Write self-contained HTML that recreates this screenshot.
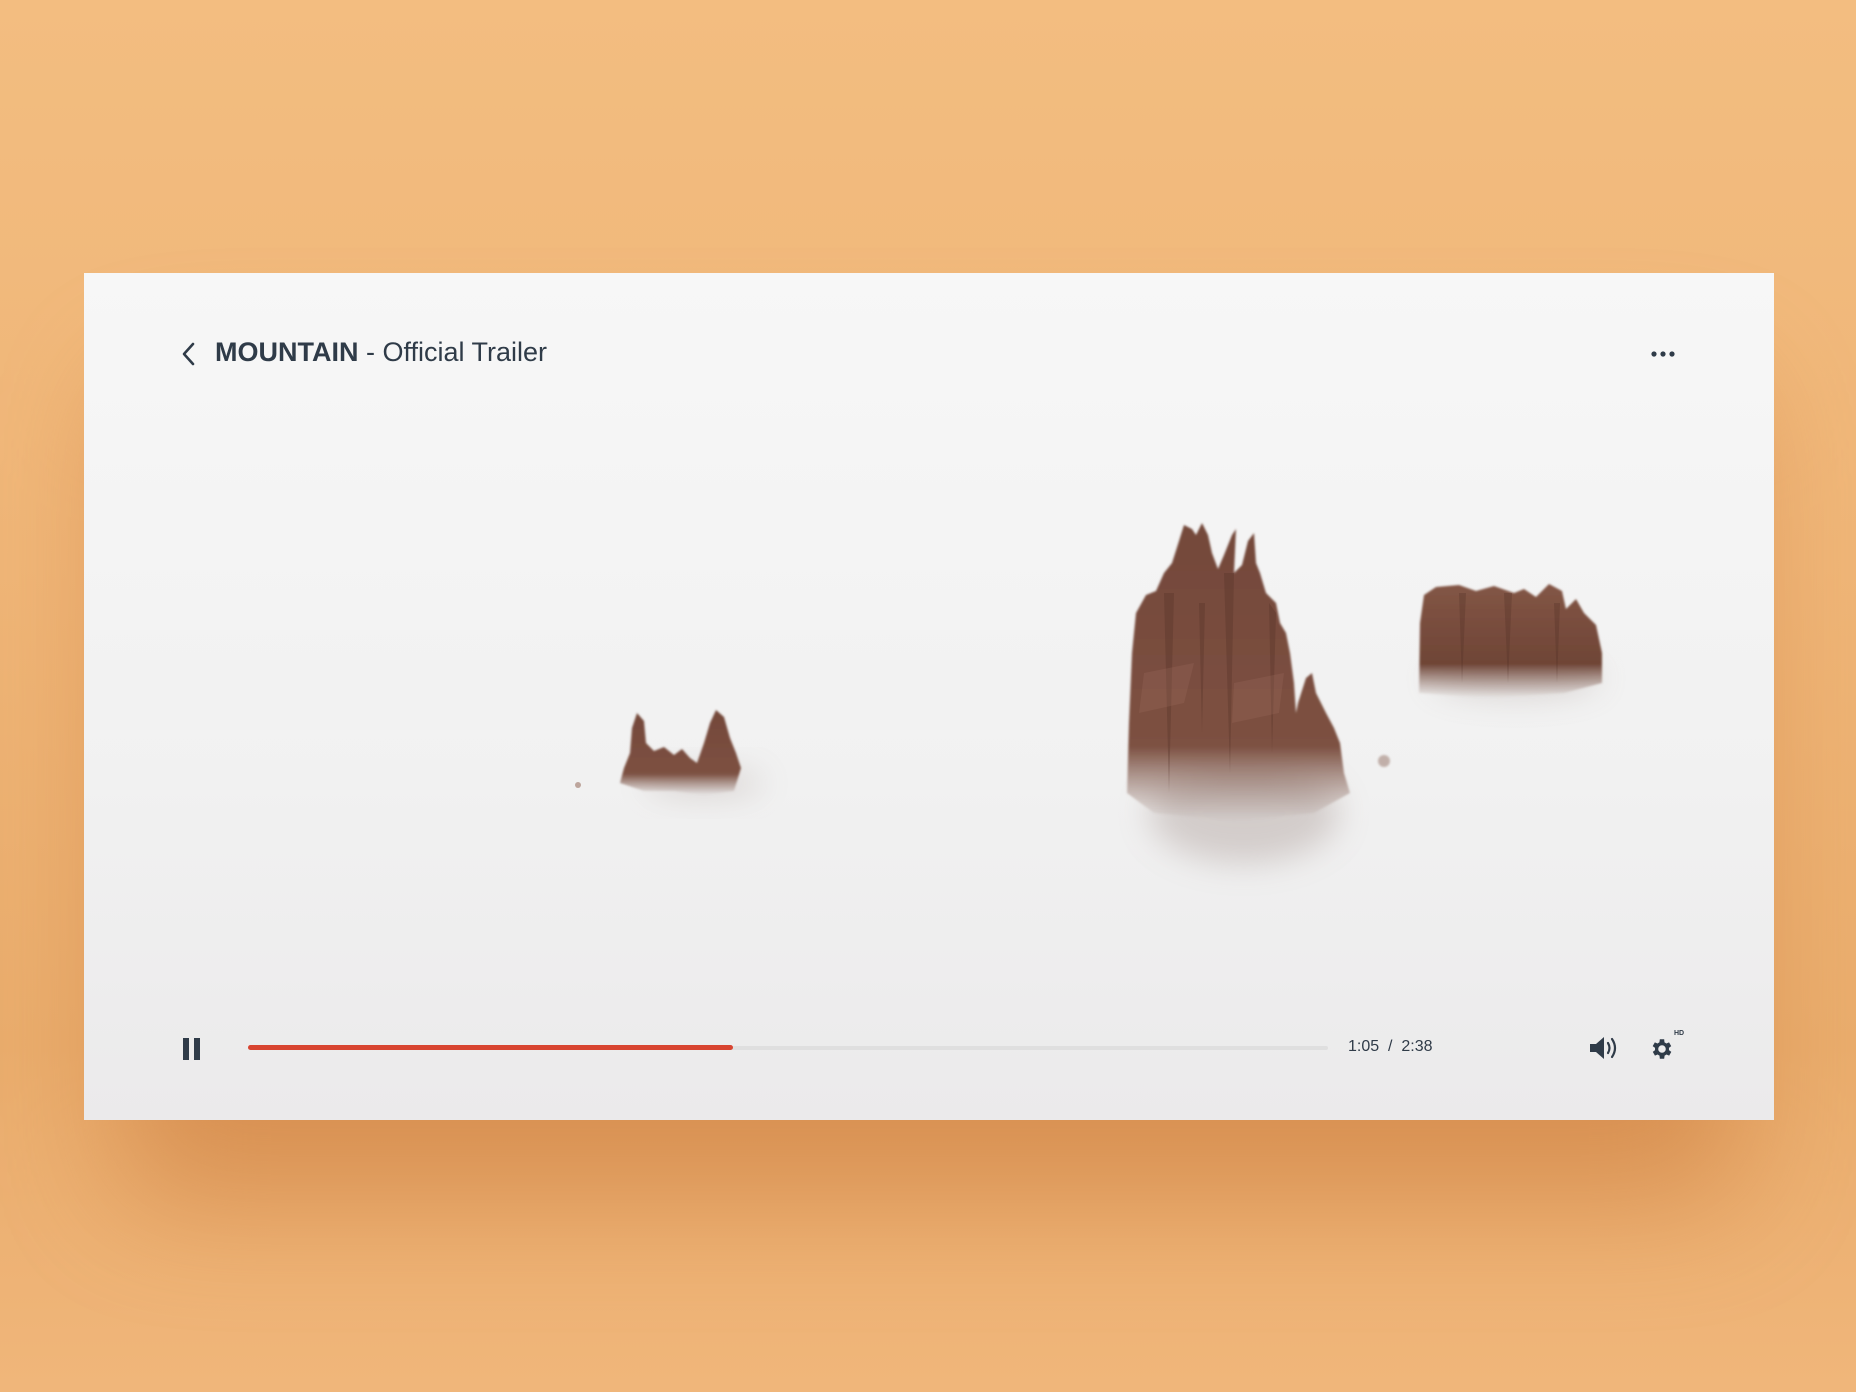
<!DOCTYPE html>
<html><head><meta charset="utf-8"><style>
html,body{margin:0;padding:0}
body{width:1856px;height:1392px;overflow:hidden;position:relative;background:linear-gradient(180deg,#f3bd80 0%,#efb577 40%,#e9ac6c 75%,#f0b67a 100%);font-family:"Liberation Sans",sans-serif}
.shadow{position:absolute;left:120px;top:380px;width:1620px;height:820px;background:#c9783a;filter:blur(60px);opacity:.55;border-radius:40px}
.card{position:absolute;left:84px;top:273px;width:1690px;height:847px;background:linear-gradient(180deg,#f7f7f7 0%,#f1f1f1 60%,#ebeaeb 100%);overflow:hidden}
.title{position:absolute;left:131px;top:64px;font-size:27px;color:#2f3b48;letter-spacing:0}
.title b{font-weight:bold}
</style></head><body>
<div class="shadow"></div>
<div class="card">
<svg width="1690" height="847" style="position:absolute;left:0;top:0">
<defs>
<filter id="b2" x="-20%" y="-20%" width="140%" height="140%"><feGaussianBlur stdDeviation="1"/></filter>
<filter id="b8" x="-100%" y="-100%" width="300%" height="300%"><feGaussianBlur stdDeviation="16"/></filter>
<linearGradient id="fade" x1="0" y1="0" x2="0" y2="1"><stop offset="0" stop-color="#74483a"/><stop offset=".75" stop-color="#7d5142"/><stop offset="1" stop-color="#8a6a60" stop-opacity="0"/></linearGradient>
<linearGradient id="fadeR" x1="0" y1="0" x2="0" y2="1"><stop offset="0" stop-color="#835646"/><stop offset=".7" stop-color="#6f4536"/><stop offset="1" stop-color="#8a6a60" stop-opacity="0"/></linearGradient>
</defs>
<ellipse cx="1160" cy="540" rx="95" ry="50" fill="#9c8a84" opacity=".35" filter="url(#b8)"/>
<ellipse cx="1432" cy="405" rx="85" ry="18" fill="#9c8a84" opacity=".3" filter="url(#b8)"/>
<ellipse cx="620" cy="510" rx="60" ry="12" fill="#9c8a84" opacity=".3" filter="url(#b8)"/>
<!-- big rock -->
<path filter="url(#b2)" fill="url(#fade)" d="M1043 520 L1045 450 L1048 380 L1052 340 L1062 322 L1072 318 L1080 300 L1088 290 L1095 268 L1100 252 L1108 256 L1112 262 L1118 250 L1124 262 L1128 280 L1134 296 L1140 282 L1148 262 L1152 256 L1150 300 L1158 292 L1164 268 L1170 260 L1172 290 L1176 300 L1182 320 L1192 330 L1196 350 L1202 360 L1206 380 L1210 410 L1212 440 L1214 430 L1222 405 L1228 400 L1232 420 L1242 440 L1250 455 L1256 470 L1260 500 L1266 520 L1230 540 L1150 548 L1070 540Z"/>
<path fill="#4e2f24" opacity=".3" d="M1080 320 L1085 520 L1090 320Z M1140 300 L1146 500 L1150 300Z M1185 330 L1188 480 L1192 340Z M1115 330 L1118 460 L1121 330Z"/>
<path fill="#a07060" opacity=".25" d="M1060 400 L1110 390 L1100 430 L1055 440Z M1150 410 L1200 400 L1195 440 L1148 450Z"/>
<!-- right rock -->
<path filter="url(#b2)" fill="url(#fadeR)" d="M1335 420 L1336 350 L1340 322 L1352 314 L1375 312 L1392 318 L1410 313 L1430 320 L1440 316 L1452 324 L1465 311 L1478 318 L1482 336 L1492 326 L1500 340 L1512 352 L1518 380 L1518 410 L1480 420 L1400 425Z"/>
<path fill="#4e2f24" opacity=".3" d="M1375 320 L1378 410 L1382 320Z M1420 320 L1424 410 L1428 320Z M1470 330 L1473 410 L1476 330Z"/>
<!-- small rocks -->
<path filter="url(#b2)" fill="url(#fade)" d="M536 510 L540 495 L546 480 L548 455 L553 440 L560 448 L562 470 L570 478 L580 474 L590 482 L598 476 L606 485 L613 490 L620 470 L626 450 L632 437 L640 444 L646 465 L652 480 L657 495 L650 518 L620 522 L590 518 L560 518Z"/>
<circle cx="494" cy="512" r="3" fill="#8a5a47" opacity=".5"/>
<circle cx="1300" cy="488" r="6" fill="#7a5040" opacity=".4" filter="url(#b2)"/>
</svg>
<svg style="position:absolute;left:96px;top:68px" width="18" height="26" viewBox="0 0 18 26"><path d="M13 3 L4 13 L13 23" fill="none" stroke="#2f3b48" stroke-width="2.6" stroke-linecap="round" stroke-linejoin="round"/></svg>
<div class="title"><b>MOUNTAIN</b> - Official Trailer</div>
<svg style="position:absolute;left:1566px;top:77px" width="26" height="8"><circle cx="4" cy="4" r="2.6" fill="#2f3b48"/><circle cx="13" cy="4" r="2.6" fill="#2f3b48"/><circle cx="22" cy="4" r="2.6" fill="#2f3b48"/></svg>
<div style="position:absolute;left:99px;top:765px;width:6px;height:22px;background:#2f3b48"></div>
<div style="position:absolute;left:110px;top:765px;width:6px;height:22px;background:#2f3b48"></div>
<div style="position:absolute;left:164px;top:773px;width:1080px;height:4px;background:#dfdfdf;border-radius:2px"></div>
<div style="position:absolute;left:164px;top:772px;width:485px;height:5px;background:#d84430;border-radius:3px"></div>
<div style="position:absolute;left:1264px;top:765px;font-size:16px;color:#2f3b48;white-space:nowrap">1:05 &nbsp;/ &nbsp;2:38</div>
<svg style="position:absolute;left:1504px;top:762px" width="34" height="26" viewBox="0 0 34 26"><path d="M2 9 H8 L16 2 V24 L8 17 H2Z" fill="#2f3b48"/><path d="M20 8 Q23 13 20 18 M24 4 Q30 13 24 22" fill="none" stroke="#2f3b48" stroke-width="2.2" stroke-linecap="round"/></svg>
<svg style="position:absolute;left:1565px;top:763px" width="26" height="26" viewBox="0 0 24 24"><path fill="#2f3b48" d="M19.4 13a7.5 7.5 0 0 0 0-2l2.1-1.6-2-3.5-2.5 1a7 7 0 0 0-1.7-1L15 3h-4l-.4 2.9a7 7 0 0 0-1.7 1l-2.5-1-2 3.5L6.6 11a7.5 7.5 0 0 0 0 2l-2.1 1.6 2 3.5 2.5-1a7 7 0 0 0 1.7 1L11 21h4l.4-2.9a7 7 0 0 0 1.7-1l2.5 1 2-3.5zM13 15.5a3.5 3.5 0 1 1 0-7 3.5 3.5 0 0 1 0 7z" transform="translate(-1 0)"/></svg>
<div style="position:absolute;left:1590px;top:757px;font-size:7px;font-weight:bold;color:#2f3b48">HD</div>
</div>
</body></html>
